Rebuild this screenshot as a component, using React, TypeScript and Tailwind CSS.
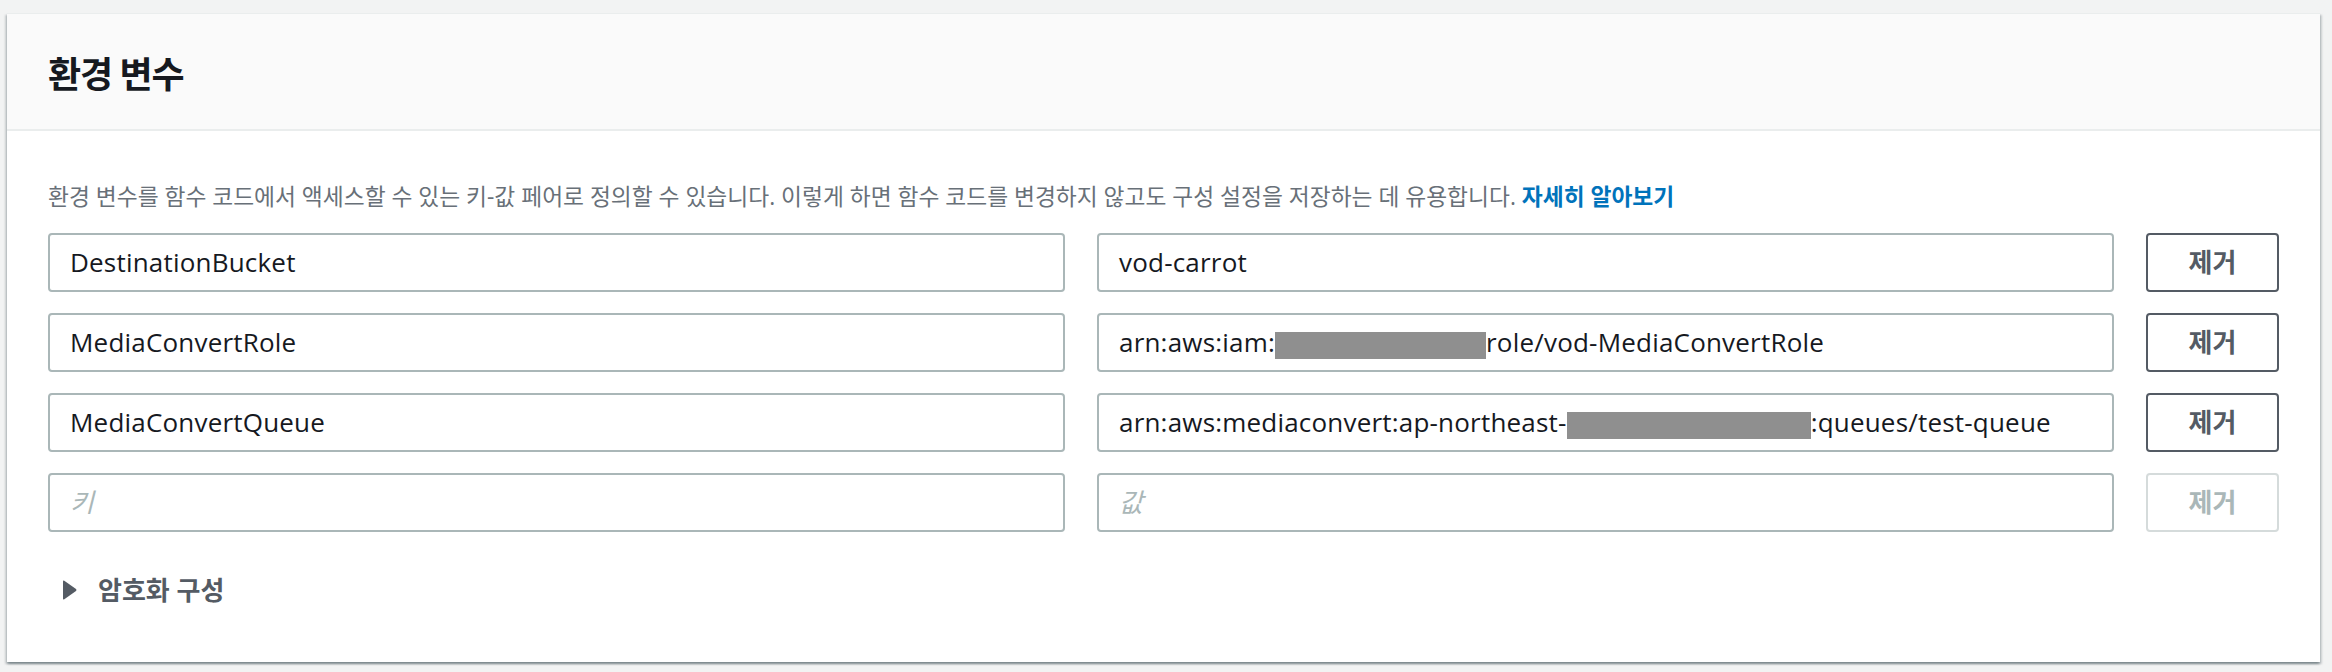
import React from 'react';

type Row = {
  name: string;
  value: React.ReactNode;
};

const Redacted: React.FC<{ w: string }> = ({ w }) => (
  <span className={`inline-block h-[27px] bg-[#8f8f8f] align-middle ${w}`} />
);

const rows: Row[] = [
  { name: 'DestinationBucket', value: 'vod-carrot' },
  {
    name: 'MediaConvertRole',
    value: (
      <>
        arn:aws:iam:
        <Redacted w="w-[211px]" />
        role/vod-MediaConvertRole
      </>
    ),
  },
  {
    name: 'MediaConvertQueue',
    value: (
      <>
        arn:aws:mediaconvert:ap-northeast-
        <Redacted w="w-[244px]" />
        :queues/test-queue
      </>
    ),
  },
];

const Field: React.FC<{ children: React.ReactNode; placeholder?: boolean }> = ({ children, placeholder }) => (
  <div className="h-[59px] border-2 border-[#aab7b8] rounded-[4px] bg-white pl-[20px] flex items-center overflow-hidden whitespace-nowrap">
    {placeholder ? (
      <span className="italic text-[#aab7b8] text-[26px]">{children}</span>
    ) : (
      <span className="text-[#16191f] text-[26px] tracking-[0.2px]">{children}</span>
    )}
  </div>
);

const RemoveButton: React.FC<{ disabled?: boolean }> = ({ disabled }) => (
  <button
    disabled={disabled}
    className={`h-[59px] rounded-[4px] border-2 bg-white text-[26px] font-bold ${
      disabled ? 'border-[#d5dbdb] text-[#aab7b8]' : 'border-[#545b64] text-[#545b64]'
    }`}
  >
    제거
  </button>
);

export default function App() {
  return (
    <div className="min-h-screen bg-[#f2f3f3] pt-[13px] pl-[7px] font-['Open_Sans','Noto_Sans_CJK_KR',sans-serif]">
      <div className="w-[2313px] h-[649px] bg-white border-t border-[#eaeded] shadow-[0_2px_2px_0_rgba(0,28,36,0.3),2px_2px_2px_0_rgba(0,28,36,0.15),-2px_2px_2px_0_rgba(0,28,36,0.15)]">
        <div className="h-[117px] bg-[#fafafa] border-b-2 border-[#eaeded] flex items-center px-[41px]">
          <h2 className="text-[36px] font-bold tracking-[-1px] text-[#16191f] font-['Noto_Sans_CJK_KR',sans-serif]">
            환경 변수
          </h2>
        </div>

        <div className="px-[41px] pt-[50px]">
          <p className="text-[22.75px] leading-[32px] text-[#687078] whitespace-nowrap">
            환경 변수를 함수 코드에서 액세스할 수 있는 키-값 페어로 정의할 수 있습니다. 이렇게 하면 함수 코드를 변경하지 않고도 구성
            설정을 저장하는 데 유용합니다. <a className="font-bold text-[#0073bb]">자세히 알아보기</a>
          </p>

          <div className="mt-[20px] grid grid-cols-[1fr_1fr_133px] gap-x-[32px] gap-y-[21px]">
            {rows.map((r) => (
              <React.Fragment key={r.name}>
                <Field>{r.name}</Field>
                <Field>{r.value}</Field>
                <RemoveButton />
              </React.Fragment>
            ))}
            <Field placeholder>키</Field>
            <Field placeholder>값</Field>
            <RemoveButton disabled />
          </div>

          <div className="mt-[40px] h-[36px] flex items-center pl-[14px] gap-[21px] text-[#545b64]">
            <svg width="15" height="20" viewBox="0 0 15 20">
              <path d="M1 1.5 Q1 0 2.3 0.8 L14 9 Q15 10 14 11 L2.3 19.2 Q1 20 1 18.5 Z" fill="#545b64" />
            </svg>
            <span className="text-[26px] font-bold">암호화 구성</span>
          </div>
        </div>
      </div>
    </div>
  );
}
